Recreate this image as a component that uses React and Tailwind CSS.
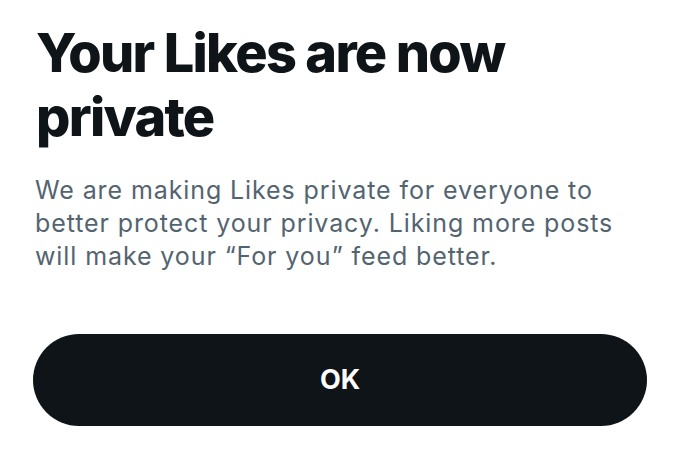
import React from 'react';

const App = () => {
  return (
    <div className="w-[680px] h-[456px] bg-white px-[33px] pt-[21px] font-['Inter',sans-serif] overflow-hidden">
      <h1 className="text-[54px] leading-[64px] font-extrabold text-[#0f1419] tracking-[-1.7px] pl-[3px]">
        Your Likes are now private
      </h1>
      <p className="mt-[25px] text-[25px] leading-[33px] text-[#536471] tracking-[0.9px] pl-[2px]">
        We are making Likes private for everyone to better protect your privacy. Liking more posts will make your “For you” feed better.
      </p>
      <button className="mt-[61px] w-full h-[92px] rounded-full bg-[#0f1419] text-white text-[27px] font-bold">
        OK
      </button>
    </div>
  );
};

export default App;
